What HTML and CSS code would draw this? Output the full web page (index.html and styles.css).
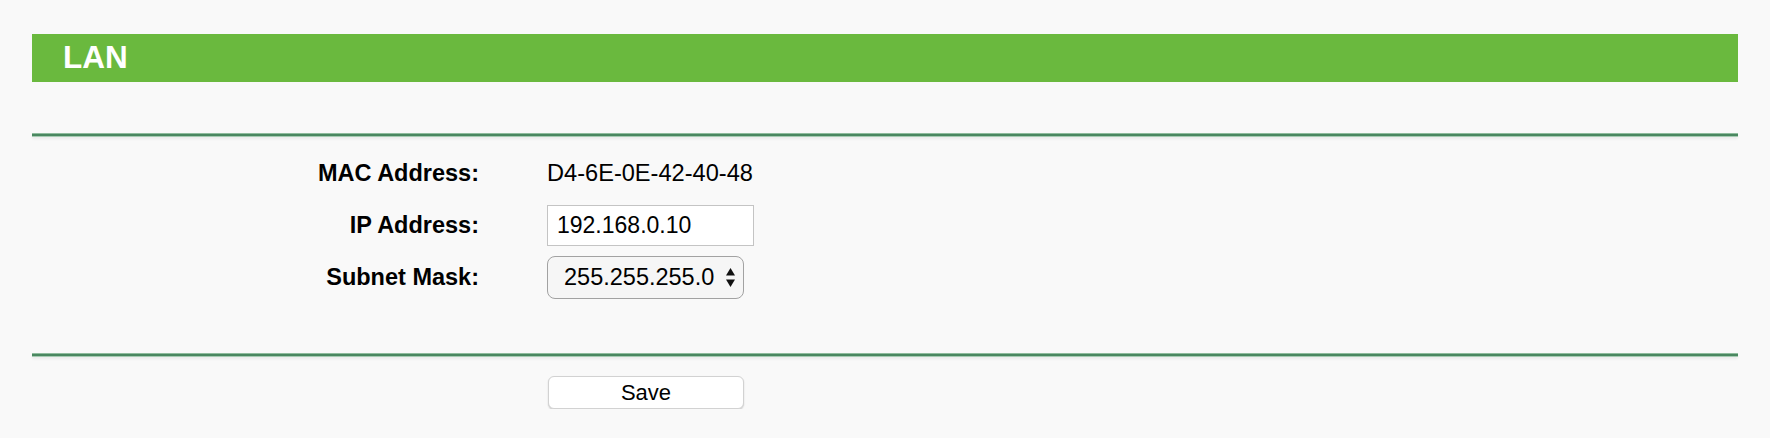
FILE: index.html
```html
<!DOCTYPE html>
<html lang="en">
<head>
<meta charset="utf-8">
<title>LAN</title>
<link rel="stylesheet" href="styles.css">
</head>
<body>
<div class="page">
  <div class="title-bar"><h1 class="title">LAN</h1></div>
  <div class="sep"></div>
  <div class="form">
    <div class="row">
      <span class="label">MAC Address:</span>
      <span class="value">D4-6E-0E-42-40-48</span>
    </div>
    <div class="row">
      <label class="label" for="ip">IP Address:</label>
      <div class="value"><input id="ip" class="text-input" type="text" value="192.168.0.10"></div>
    </div>
    <div class="row">
      <label class="label" for="mask">Subnet Mask:</label>
      <div class="value">
        <div class="select-wrap">
          <select id="mask" class="select">
            <option>255.255.255.0</option>
          </select>
          <svg class="select-arrows" width="9" height="19" viewBox="0 0 9 19" aria-hidden="true">
            <path d="M4.5 0 L9 7.5 L0 7.5 Z" fill="#111"/>
            <path d="M0 11.5 L9 11.5 L4.5 19 Z" fill="#111"/>
          </svg>
        </div>
      </div>
    </div>
  </div>
  <div class="sep"></div>
  <div class="actions">
    <span class="spacer"></span>
    <div class="value"><button class="btn" type="button">Save</button></div>
  </div>
</div>
</body>
</html>
```

FILE: styles.css
```css
html, body {
  margin: 0;
  padding: 0;
  background: #f9f9f9;
}
body {
  font-family: "Liberation Sans", Arial, Helvetica, sans-serif;
  color: #000;
}
.page {
  padding: 34px 32px 0;
}
.title-bar {
  height: 48px;
  background: #6ab93e;
  padding-left: 31px;
}
.title {
  margin: 0;
  font-size: 31.5px;
  font-weight: bold;
  line-height: 46px;
  color: #fff;
}
.sep {
  height: 4px;
  margin-top: 51px;
  background: linear-gradient(#8fbc9d 0, #8fbc9d 1px, #4a8760 1px, #4a8760 3px, #a6cbb2 3px);
  box-shadow: 0 2px 3px rgba(0, 0, 0, 0.06);
}
.form {
  padding-top: 10px;
  padding-bottom: 50px;
}
.form + .sep {
  margin-top: 0;
}
.row, .actions {
  display: grid;
  grid-template-columns: 447px 1fr;
  column-gap: 68px;
  align-items: center;
}
.row {
  height: 52px;
}
.label {
  text-align: right;
  font-weight: bold;
  font-size: 23.5px;
}
.value {
  font-size: 23.6px;
  display: flex;
  align-items: center;
}
.text-input {
  box-sizing: border-box;
  width: 207px;
  height: 41px;
  margin: 0;
  padding: 0 0 0 9px;
  border: 1px solid #c4c4c4;
  border-radius: 0;
  background: #fff;
  font-family: inherit;
  font-size: 23px;
  color: #000;
  outline: none;
}
.select-wrap {
  position: relative;
  width: 197px;
  height: 43px;
}
.select {
  -webkit-appearance: none;
  appearance: none;
  box-sizing: border-box;
  width: 197px;
  height: 43px;
  margin: 0;
  padding: 0 0 0 16px;
  border: 1.5px solid #a2a2a2;
  border-radius: 8px;
  background: #f6f6f6;
  font-family: inherit;
  font-size: 23.5px;
  color: #000;
  outline: none;
}
.select-arrows {
  position: absolute;
  left: 179px;
  top: 12px;
  pointer-events: none;
}
.actions {
  padding-top: 19px;
}
.btn {
  box-sizing: border-box;
  width: 196px;
  height: 33px;
  margin: 0 0 0 1px;
  padding: 0;
  border: 1px solid #d2d2d2;
  border-radius: 6px;
  background: #fff;
  box-shadow: 0 1px 1.5px rgba(0, 0, 0, 0.18);
  font-family: inherit;
  font-size: 22px;
  color: #000;
}
```
